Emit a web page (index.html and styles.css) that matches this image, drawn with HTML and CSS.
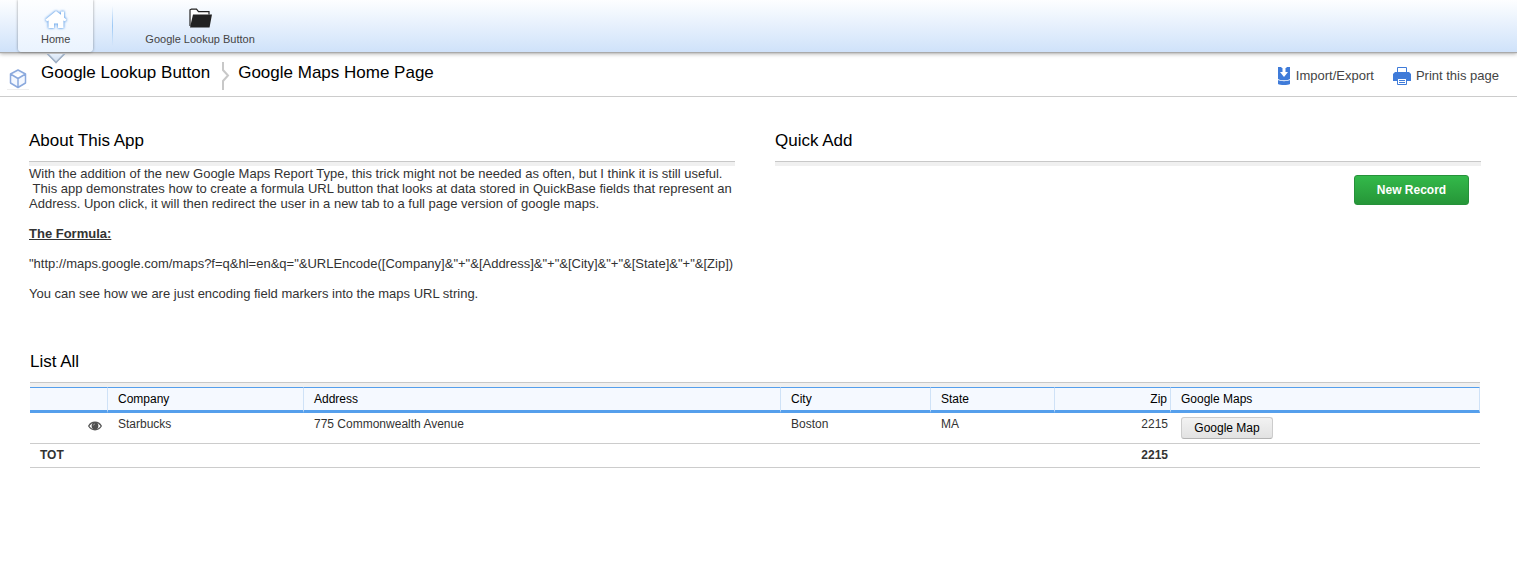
FILE: index.html
```
<!DOCTYPE html>
<html lang="en">
<head>
  <meta charset="utf-8">
  <meta name="viewport" content="width=device-width, initial-scale=1.0">
  <title>Google Maps Home Page</title>
  <link rel="stylesheet" href="styles.css">
</head>
<body>

  <nav class="tab-bar">
    <a href="#" class="tab active">
      <svg class="home-icon" width="26" height="22" viewBox="0 0 26 22">
        <path d="M13 3L2.500 11.500 4 13.500 5.500 12.500V20H11v-4.500h4V20h5.500v-7.500l1.500 1 1.500-2L21 9.500V3.500h-3v3.300z" fill="#fff"/>
      </svg>
      <span>Home</span>
    </a>
    <span class="tab-divider"></span>
    <a href="#" class="tab">
      <svg width="26" height="22" viewBox="0 0 26 22">
        <path d="M3 18V1.800L4.500 1.200h5l2 2.500h10.500V6.500" fill="#fff" stroke="#222" stroke-width="1.200"/>
        <path d="M6 6.500H25L22.500 19.500H3z" fill="#222"/>
      </svg>
      <span>Google Lookup Button</span>
    </a>
  </nav>

  <header class="page-bar">
    <svg class="cube" width="22" height="24" viewBox="0 0 22 24">
      <path d="M11 3l7.500 4v9L11 20.500 3.500 16V7zM3.500 7L11 11.500 18.500 7M11 11.500v9" fill="#f4f8ff" stroke="#8ba9dd" stroke-width="1.500" stroke-linejoin="round"/>
      <path d="M0 22.500h22" stroke="#eee"/>
    </svg>
    <a href="#" class="crumb">Google Lookup Button</a>
    <svg class="chevron" width="8" height="28" viewBox="0 0 8 28">
      <path d="M1 0v8l5 5.500L1 19v9" fill="none" stroke="#c8c8c8" stroke-width="2"/>
    </svg>
    <h1 class="crumb">Google Maps Home Page</h1>
    <div class="page-actions">
      <a href="#">
        <svg width="14" height="18" viewBox="0 0 14 18">
          <path d="M1 0h12v12c-2 1.800-10 1.800-12 0zM1 13c2 1.500 10 1.500 12 0V17c-2 1.300-10 1.300-12 0z" fill="#3f7bd9"/>
          <path d="M4.500 0h5v1h-1v4H11l-4 5L3 5h2.500V1h-1z" fill="#fff"/>
        </svg>
        Import/Export
      </a>
      <a href="#">
        <svg width="18" height="18" viewBox="0 0 18 18">
          <path d="M4.500 6V.500h9V6" fill="#fff" stroke="#3f7bd9"/>
          <path d="M2 5h14l2 2v7H0V7z" fill="#3f7bd9"/>
          <path d="M4.500 11.500h9v6h-9z" fill="#fff" stroke="#3f7bd9"/>
          <path d="M6 13.500h6M6 15.500h6" stroke="#3f7bd9"/>
        </svg>
        Print this page
      </a>
    </div>
  </header>

  <main class="content">
    <div class="columns">
      <section>
        <h2>About This App</h2>
        <div class="about-text">
          <p>With the addition of the new Google Maps Report Type, this trick might not be needed as often, but I think it is still useful. &nbsp;This app demonstrates how to create a formula URL button that looks at data stored in QuickBase fields that represent an Address. Upon click, it will then redirect the user in a new tab to a full page version of google maps.</p>
          <p><b><u>The Formula:</u></b></p>
          <p>"http://maps.google.com/maps?f=q&amp;hl=en&amp;q="&amp;URLEncode([Company]&amp;"+"&amp;[Address]&amp;"+"&amp;[City]&amp;"+"&amp;[State]&amp;"+"&amp;[Zip])</p>
          <p>You can see how we are just encoding field markers into the maps URL string.</p>
        </div>
      </section>
      <section>
        <h2>Quick Add</h2>
        <div class="quick-add">
          <button type="button" class="new-record">New Record</button>
        </div>
      </section>
    </div>

    <section class="list-all">
      <h2>List All</h2>
      <table>
        <colgroup>
          <col class="col-view">
          <col class="col-company">
          <col>
          <col class="col-city">
          <col class="col-state">
          <col class="col-zip">
          <col class="col-maps">
        </colgroup>
        <thead>
          <tr>
            <th></th>
            <th>Company</th>
            <th>Address</th>
            <th>City</th>
            <th>State</th>
            <th class="num">Zip</th>
            <th>Google Maps</th>
          </tr>
        </thead>
        <tbody>
          <tr>
            <td class="view">
              <a href="#" aria-label="View record">
                <svg width="14" height="10" viewBox="0 0 14 10">
                  <path d="M.700 5C3.500 0 10.500 0 13.300 5 10.500 10 3.500 10 .700 5z" fill="#fff" stroke="#555" stroke-width="1.300"/>
                  <circle cx="7" cy="5" r="3.400" fill="#505050"/>
                  <path d="M5.300 4.500Q5.500 3 7 3" fill="none" stroke="#aaa" stroke-width=".8"/>
                </svg>
              </a>
            </td>
            <td>Starbucks</td>
            <td>775 Commonwealth Avenue</td>
            <td>Boston</td>
            <td>MA</td>
            <td class="num">2215</td>
            <td><button type="button" class="map-button">Google Map</button></td>
          </tr>
        </tbody>
        <tfoot>
          <tr>
            <td>TOT</td>
            <td></td>
            <td></td>
            <td></td>
            <td></td>
            <td class="num">2215</td>
            <td></td>
          </tr>
        </tfoot>
      </table>
    </section>
  </main>

</body>
</html>
```

FILE: styles.css
```
* {
  box-sizing: border-box;
}

body {
  margin: 0;
  font-family: "Liberation Sans", Helvetica, Arial, sans-serif;
  font-size: 13px;
  line-height: 15px;
  color: #333;
  background: #fff;
}

a {
  color: inherit;
  text-decoration: none;
}

svg {
  display: block;
}

/* top tabs */
.tab-bar {
  display: flex;
  height: 52px;
  padding-left: 18px;
  background: linear-gradient(#fdfeff, #cfe2fa);
  box-shadow: 0 1px 1px #aaa, 0 2px 4px rgba(0, 0, 0, 0.3);
}

.tab {
  position: relative;
  display: flex;
  flex-direction: column;
  align-items: center;
  gap: 2px;
  padding: 8px 23px 0;
  font-size: 11px;
  color: #444;
}

.tab.active {
  background: linear-gradient(#fdfeff, #eaf3fe);
  border-radius: 0 0 4px 4px;
  box-shadow: 0 0 3px rgba(0, 0, 0, 0.4);
}

/* pointer under the selected tab */
.tab.active::after {
  content: "";
  position: absolute;
  top: 100%;
  left: 50%;
  width: 12px;
  height: 12px;
  margin: -5px 0 0 -7px;
  border: solid #a3b3c8;
  border-width: 0 2px 2px 0;
  background: linear-gradient(135deg, #eaf3fe 50%, #d3e0f1);
  clip-path: polygon(100% 0, 100% 100%, 0 100%);
  transform: rotate(45deg);
}

.home-icon {
  filter: drop-shadow(0 0 1px #5f9fe8) drop-shadow(0 0 1px #8fbcf0);
}

.tab-divider {
  width: 1px;
  margin: 6px 9px 6px 19px;
  background: linear-gradient(rgba(155, 200, 245, 0), #9bc8f5, rgba(155, 200, 245, 0));
}

/* breadcrumb */
.page-bar {
  display: flex;
  align-items: flex-start;
  padding: 10px 18px 5px 7px;
  border-bottom: 1px solid #ccc;
}

.cube {
  margin: 5px 12px 0 0;
}

.crumb {
  margin: 0;
  font-size: 17px;
  font-weight: normal;
  line-height: 22px;
  color: #000;
}

.chevron {
  margin: 0 8px 0 12px;
}

.page-actions {
  display: flex;
  gap: 19px;
  margin: 5px 0 0 auto;
}

.page-actions a {
  display: flex;
  gap: 5px;
  line-height: 18px;
  color: #444;
}

/* content */
.content {
  padding: 33px 36px 40px 29px;
}

.columns {
  display: grid;
  grid-template-columns: 1fr 1fr;
  gap: 40px;
}

h2 {
  margin: 0;
  font-size: 17px;
  font-weight: normal;
  line-height: 22px;
  color: #000;
}

h2::after {
  content: "";
  display: block;
  height: 4px;
  margin-top: 9px;
  border-top: 1px solid #c8c8c8;
  background: #f0f0f0;
}

.about-text p {
  margin: 0 0 15px;
}

.quick-add {
  display: flex;
  justify-content: flex-end;
  padding: 9px 12px 0 0;
}

.new-record {
  width: 115px;
  height: 30px;
  border: 1px solid #26913a;
  border-radius: 3px;
  background: linear-gradient(#33b94a, #269638);
  font: bold 12px "Liberation Sans", Helvetica, Arial, sans-serif;
  color: #fff;
}

.list-all {
  margin: 35px 1px 0;
}

/* report table */
table {
  width: 100%;
  table-layout: fixed;
  border-collapse: separate;
  border-spacing: 0;
  font-size: 12px;
}

.col-view {
  width: 78px;
}

.col-company {
  width: 196px;
}

.col-city {
  width: 150px;
}

.col-state {
  width: 124px;
}

.col-zip {
  width: 116px;
}

.col-maps {
  width: 309px;
}

th {
  padding: 4px 3px 3px 10px;
  border-top: 1px solid #559fec;
  border-right: 1px solid #cfe2f7;
  border-bottom: 3px solid #559fec;
  background: #f5f9ff;
  font-weight: normal;
  text-align: left;
  color: #000;
}

td {
  padding: 4px 3px 4px 10px;
  border-bottom: 1px solid #ccc;
  vertical-align: top;
}

.num {
  text-align: right;
}

.view {
  padding: 8px 6px 0 0;
}

.view a {
  display: flex;
  justify-content: flex-end;
}

.map-button {
  display: block;
  width: 92px;
  height: 22px;
  padding: 0;
  border: 1px solid #ccc;
  border-bottom-color: #b4b4b4;
  border-radius: 3px;
  background: linear-gradient(#f2f2f2, #e2e2e2);
  font: 12px "Liberation Sans", Helvetica, Arial, sans-serif;
  color: #000;
}

tfoot td {
  font-weight: bold;
}
```
